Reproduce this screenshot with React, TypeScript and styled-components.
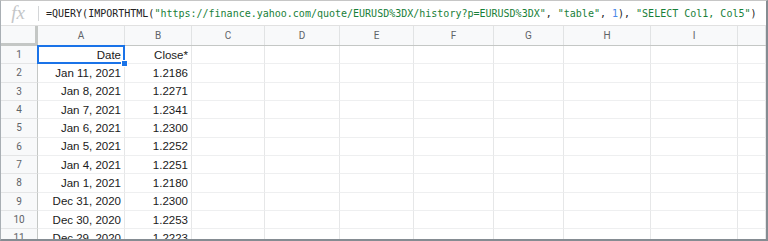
import React from "react";
import styled, { createGlobalStyle } from "styled-components";

const Global = createGlobalStyle`
  html, body { margin: 0; padding: 0; background: #ffffff; }
  * { box-sizing: border-box; }
`;

const COLS = "37px 87px 67px 73px 75px 74px 80px 70px 87px 87px 28px";

const Frame = styled.div`
  width: 768px;
  height: 241px;
  overflow: hidden;
  border-top: 1px solid #c6c6c6;
  border-left: 1px solid #a9afb4;
  border-right: 2px solid #858c92;
  border-bottom: 2px solid #858c92;
  background: #fff;
  display: flex;
  flex-direction: column;
`;

const FormulaBar = styled.div`
  height: 25px;
  flex: none;
  display: flex;
  align-items: center;
  border-bottom: 1px solid #e1e1e1;
  background: #fff;
`;

const FxIcon = styled.div`
  width: 37px;
  flex: none;
  display: flex;
  justify-content: center;
  font-family: "Liberation Serif", serif;
  font-style: italic;
  font-size: 19px;
  color: #c4c6c8;
  padding-right: 3px;
`;

const Divider = styled.div`
  width: 1px;
  height: 15px;
  background: #d4d6d8;
  flex: none;
`;

const Formula = styled.div`
  padding-left: 7px;
  font-family: "DejaVu Sans Mono", "Liberation Mono", monospace;
  font-size: 10px;
  color: #222;
  white-space: nowrap;
`;

const Str = styled.span`
  color: #188038;
`;
const Num = styled.span`
  color: #4a88e8;
`;

const Grid = styled.div`
  display: flex;
  flex-direction: column;
  flex: 1;
`;

const HeaderRow = styled.div`
  display: grid;
  grid-template-columns: ${COLS};
  height: 20px;
  flex: none;
  background: #f8f9fa;
  border-bottom: 1px solid #c4c7c5;
`;

const Corner = styled.div`
  border-right: 3px solid #c4c7c5;
  margin-bottom: -1px;
  border-bottom: 3px solid #c4c7c5;
  background: #f8f9fa;
`;

const ColHead = styled.div`
  display: flex;
  align-items: center;
  justify-content: center;
  border-right: 1px solid #e1e3e4;
  font-family: "Roboto", "Liberation Sans", sans-serif;
  font-size: 10px;
  color: #5f6368;
`;

const Row = styled.div`
  display: grid;
  grid-template-columns: ${COLS};
  height: 18.33px;
  flex: none;
`;

const RowHead = styled.div`
  display: flex;
  align-items: center;
  justify-content: center;
  background: #f8f9fa;
  border-right: 1px solid #c4c7c5;
  border-bottom: 1px solid #e4e5e6;
  font-family: "Roboto", "Liberation Sans", sans-serif;
  font-size: 10px;
  color: #5f6368;
`;

const Cell = styled.div<{ $selected?: boolean }>`
  position: relative;
  display: flex;
  align-items: center;
  justify-content: flex-end;
  padding-right: 3px;
  border-right: 1px solid #e6e7e8;
  border-bottom: 1px solid #eeeff0;
  font-family: "Liberation Sans", Arial, sans-serif;
  font-size: 11.5px;
  color: #1a1a1a;
  white-space: nowrap;
  overflow: visible;
  ${(p) =>
    p.$selected
      ? `
    &::after {
      content: "";
      position: absolute;
      left: -1px;
      top: -1px;
      right: -1px;
      bottom: -1px;
      border: 2px solid #1a73e8;
      pointer-events: none;
      z-index: 2;
    }
  `
      : ""}
`;

const Handle = styled.span`
  position: absolute;
  right: -4px;
  bottom: -4px;
  width: 7px;
  height: 7px;
  background: #1a73e8;
  border: 1px solid #fff;
  z-index: 3;
`;

const letters = ["A", "B", "C", "D", "E", "F", "G", "H", "I", ""];

const data: [string, string][] = [
  ["Date", "Close*"],
  ["Jan 11, 2021", "1.2186"],
  ["Jan 8, 2021", "1.2271"],
  ["Jan 7, 2021", "1.2341"],
  ["Jan 6, 2021", "1.2300"],
  ["Jan 5, 2021", "1.2252"],
  ["Jan 4, 2021", "1.2251"],
  ["Jan 1, 2021", "1.2180"],
  ["Dec 31, 2020", "1.2300"],
  ["Dec 30, 2020", "1.2253"],
  ["Dec 29, 2020", "1.2223"],
];

export default function App() {
  return (
    <>
      <Global />
      <Frame>
        <FormulaBar>
          <FxIcon>fx</FxIcon>
          <Divider />
          <Formula>
            =QUERY(IMPORTHTML(
            <Str>"https://finance.yahoo.com/quote/EURUSD%3DX/history?p=EURUSD%3DX"</Str>,{" "}
            <Str>"table"</Str>, <Num>1</Num>), <Str>"SELECT Col1, Col5"</Str>)
          </Formula>
        </FormulaBar>
        <Grid>
          <HeaderRow>
            <Corner />
            {letters.map((l, i) => (
              <ColHead key={i}>{l}</ColHead>
            ))}
          </HeaderRow>
          {data.map(([a, b], r) => (
            <Row key={r}>
              <RowHead>{r + 1}</RowHead>
              <Cell $selected={r === 0}>
                {a}
                {r === 0 && <Handle />}
              </Cell>
              <Cell>{b}</Cell>
              {letters.slice(2).map((_, i) => (
                <Cell key={i} />
              ))}
            </Row>
          ))}
        </Grid>
      </Frame>
    </>
  );
}
